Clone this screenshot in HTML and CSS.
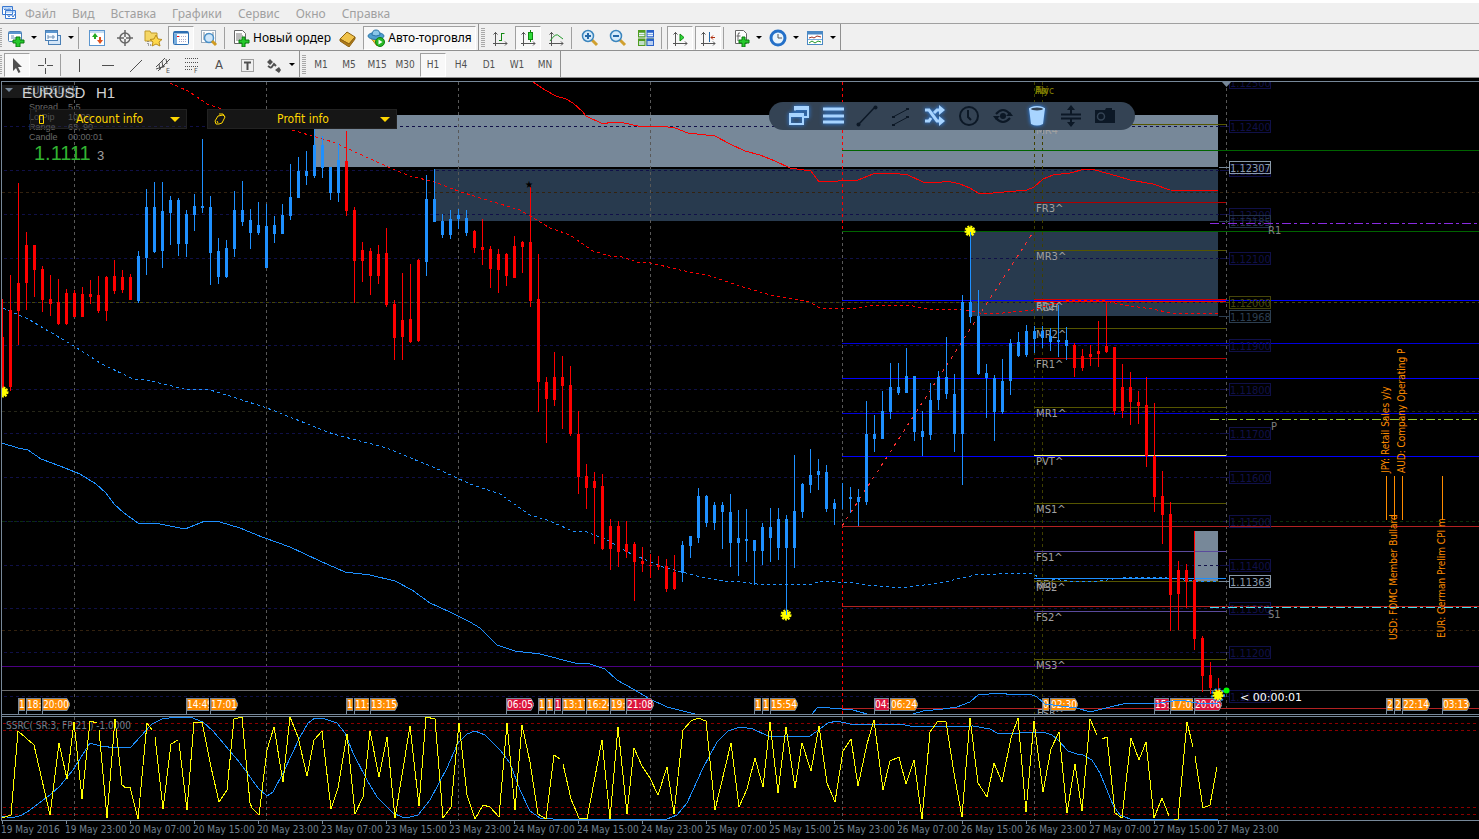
FILE: index.html
```
<!DOCTYPE html>
<html lang="ru">
<head>
    <meta charset="UTF-8">
    <meta name="viewport" content="width=device-width, initial-scale=1.0">
    <title>EURUSD, H1</title>
    <link rel="stylesheet" href="styles.css">
</head>
<body>
    <nav class="menu">
        <svg class="logo" width="16" height="16" viewBox="0 0 16 16"><path d="M1.500 1.500h10v8h-10zM4.500 5.500h10v8h-10z" fill="#fff" stroke="#3a78d0"/><path d="M2 3h9M5 7h9" stroke="#7ab0f0"/><path d="M6 9l2 3 2-3 2 3 2-3M3 5l1-1 2 1 2-1 2 1" fill="none" stroke="#3a78d0"/></svg>
        <button type="button">Файл</button>
        <button type="button">Вид</button>
        <button type="button">Вставка</button>
        <button type="button">Графики</button>
        <button type="button">Сервис</button>
        <button type="button">Окно</button>
        <button type="button">Справка</button>
    </nav>

    <div class="toolbars">
        <div class="toolbar">
            <span class="grip"></span>
            <button type="button" class="drop" aria-label="Новый график"><svg width="18" height="18" viewBox="0 0 18 18"><rect x="1.500" y="2.500" width="13" height="10" rx="1" fill="#fff" stroke="#4a7fb5"/><path d="M2 4h12" stroke="#5b96cf" stroke-width="2"/><path d="M4 7h3M4 9h5" stroke="#6a8fb5"/><path d="M9 8h4v3h4v3h-4v4H9v-4H6v-3h3z" fill="#25c92b" stroke="#0a7a10"/></svg></button>
            <button type="button" class="drop" aria-label="Профили"><svg width="18" height="18" viewBox="0 0 18 18"><rect x="4.500" y="6.500" width="12" height="9" fill="#d4e6f8" stroke="#4a7fb5"/><rect x="1.500" y="1.500" width="12" height="10" fill="#f4f9ff" stroke="#4a7fb5"/><path d="M2 3h11" stroke="#5b96cf" stroke-width="2"/><path d="M4 6v4M4 8h7M9 6v4" stroke="#6a8fb5"/></svg></button>
            <span class="sep"></span>
            <button type="button" aria-label="Обзор рынка"><svg width="18" height="18" viewBox="0 0 18 18"><rect x="1.500" y="1.500" width="15" height="15" fill="#fff" stroke="#5b96cf"/><path d="M2 3h14" stroke="#8fbce8"/><path d="M4 8l3-4 3 4H8v2H6V8z" fill="#22aa22"/><path d="M9 11h2V8h2v3h2l-3 4z" fill="#e0501e"/></svg></button>
            <button type="button" aria-label="Окно данных"><svg width="18" height="18" viewBox="0 0 18 18"><circle cx="9" cy="9" r="5" fill="none" stroke="#666" stroke-width="1.500"/><path d="M9 1v7M9 10v7M1 9h7M10 9h7" stroke="#666" stroke-width="1.500"/></svg></button>
            <button type="button" aria-label="Навигатор"><svg width="18" height="18" viewBox="0 0 18 18"><path d="M1 2h5l1 2h6v8H1z" fill="#f5d766" stroke="#c09a2a"/><path d="M4 12v4h5" fill="none" stroke="#555" stroke-dasharray="1 1"/><path d="M12 6l2 4 4 .500-3 2.500 1 4-4-2-4 2 1-4-3-2.500 4-.500z" fill="#ffd84a" stroke="#b98d1c"/></svg></button>
            <button type="button" class="on" aria-label="Терминал"><svg width="18" height="18" viewBox="0 0 18 18"><rect x="1.500" y="2.500" width="15" height="13" rx="1" fill="#fff" stroke="#2d6fb3"/><path d="M2 3.500h14" stroke="#2d6fb3" stroke-width="2"/><path d="M3.500 5v10" stroke="#79aede" stroke-width="3"/><path d="M7 7.500h8M7 10.500h8M7 12.500h8" stroke="#aac" stroke-dasharray="1 1"/><path d="M5 7.500h2" stroke="red"/></svg></button>
            <button type="button" aria-label="Тестер стратегий"><svg width="18" height="18" viewBox="0 0 18 18"><rect x="1.500" y="1.500" width="14" height="12" fill="#fff" stroke="#9ab"/><path d="M4 3v8M7 4v6M13 3v9" stroke="#789"/><circle cx="9" cy="9" r="4.500" fill="#cfe6f9" stroke="#4a90c8" stroke-width="1.500"/><path d="M12 12l4 4" stroke="#d09a20" stroke-width="3"/></svg></button>
            <span class="sep"></span>
            <button type="button" class="wide order"><svg width="18" height="18" viewBox="0 0 18 18"><path d="M2.500 1.500h8l3 3v10h-11z" fill="#fff" stroke="#666"/><path d="M4 5h6M4 7h7M4 9h5M4 11h4" stroke="#777"/><path d="M10 8h3v3h4v3h-4v4h-3v-4H7v-3h3z" fill="#25c92b" stroke="#0a7a10"/></svg>Новый ордер</button>
            <button type="button" aria-label="Редактор"><svg width="18" height="18" viewBox="0 0 18 18"><path d="M1 10l7-7 8 5-6 7z" fill="#f0c24a" stroke="#8f6412"/><path d="M1 10v2l9 6 6-8V8l-6 7z" fill="#b07a18" stroke="#8f6412"/></svg></button>
            <button type="button" class="wide auto on"><svg width="18" height="18" viewBox="0 0 18 18"><path d="M3 8l7 9 5-8z" fill="#f3c435" stroke="#b98d1c"/><ellipse cx="9" cy="7" rx="8" ry="3.500" fill="#4f9ed0" stroke="#2b75a8"/><path d="M5 6q0-5 4-5t4 5q-4 2-8 0" fill="#8cc8ea" stroke="#2b75a8"/><circle cx="13" cy="13" r="4.500" fill="#27b827" stroke="#118011"/><path d="M11.500 10.500v5l4-2.500z" fill="#fff"/></svg>Авто-торговля</button>
        </div>
        <div class="toolbar">
            <span class="grip"></span>
            <button type="button" aria-label="Бары"><svg width="18" height="18" viewBox="0 0 18 18"><path d="M4.500 3v14M2 14.500h14M2.500 5.500l2-2 2 2M14 12.500l2 2-2 2" fill="none" stroke="#555"/><path d="M10.500 4v8M10.500 4.500h3M8 11.500h2" stroke="#118811" fill="none"/></svg></button>
            <button type="button" class="on" aria-label="Свечи"><svg width="18" height="18" viewBox="0 0 18 18"><path d="M4.500 3v14M2 14.500h14M2.500 5.500l2-2 2 2M14 12.500l2 2-2 2" fill="none" stroke="#555"/><path d="M11.500 1v12" stroke="#118811"/><rect x="9.500" y="3.500" width="4" height="7" fill="#2fdc3a" stroke="#118811"/></svg></button>
            <button type="button" aria-label="Линия"><svg width="18" height="18" viewBox="0 0 18 18"><path d="M4.500 3v14M2 14.500h14M2.500 5.500l2-2 2 2M14 12.500l2 2-2 2" fill="none" stroke="#555"/><path d="M3 12q6-9 9-5l4 3" fill="none" stroke="#22992a"/></svg></button>
            <span class="sep"></span>
            <button type="button" aria-label="Увеличить"><svg width="18" height="18" viewBox="0 0 18 18"><path d="M11 11l5 5" stroke="#d0a030" stroke-width="3"/><circle cx="7" cy="7" r="5.500" fill="#d6ebfa" stroke="#3b85bd" stroke-width="1.500"/><path d="M4 7h6M7 4v6" stroke="#2468a8" stroke-width="2"/></svg></button>
            <button type="button" aria-label="Уменьшить"><svg width="18" height="18" viewBox="0 0 18 18"><path d="M11 11l5 5" stroke="#d0a030" stroke-width="3"/><circle cx="7" cy="7" r="5.500" fill="#d6ebfa" stroke="#3b85bd" stroke-width="1.500"/><path d="M4 7h6" stroke="#2468a8" stroke-width="2"/></svg></button>
            <button type="button" aria-label="Окна мозаикой"><svg width="18" height="18" viewBox="0 0 18 18"><path d="M1 1h7.500v7.500H1zM9.500 9.500H17V17H9.500z" fill="#4f9c20"/><path d="M9.500 1H17v7.500H9.500z" fill="#2a62c8"/><path d="M1 9.500h7.500V17H1z" fill="#4f9c20"/><path d="M9.500 9.500H17V17H9.500z" fill="#2a62c8"/><path d="M2 4.500h5.500M2 6.500h5.500M10.500 4.500H16M10.500 6.500H16M2 13h5.500M2 15h5.500M10.500 13H16M10.500 15H16" stroke="#e8f4ff" stroke-width="1.500"/></svg></button>
            <span class="sep"></span>
            <button type="button" class="on" aria-label="Автопрокрутка"><svg width="18" height="18" viewBox="0 0 18 18"><path d="M4.500 3v14M2 14.500h14M2.500 5.500l2-2 2 2M14 12.500l2 2-2 2" fill="none" stroke="#555"/><path d="M9 5v7l4-3.500z" fill="#2fdc3a" stroke="#118811"/></svg></button>
            <button type="button" class="on" aria-label="Сдвиг графика"><svg width="18" height="18" viewBox="0 0 18 18"><path d="M4.500 3v14M2 14.500h14M2.500 5.500l2-2 2 2M14 12.500l2 2-2 2" fill="none" stroke="#555"/><path d="M10.500 3v10" stroke="#2468a8"/><path d="M16 8.500h-4M14 6.500l-2 2 2 2" stroke="#b03010" fill="none"/></svg></button>
            <span class="sep"></span>
            <button type="button" class="drop" aria-label="Индикаторы"><svg width="18" height="18" viewBox="0 0 18 18"><path d="M3.500 1.500h8l3 3v10h-11z" fill="#fff" stroke="#666"/><path d="M8 4q-2-1-2 2v6M4.500 7h4" stroke="#666" fill="none"/><path d="M10 8h3v3h4v3h-4v4h-3v-4H7v-3h3z" fill="#25c92b" stroke="#0a7a10"/></svg></button>
            <button type="button" class="drop" aria-label="Периоды"><svg width="18" height="18" viewBox="0 0 18 18"><circle cx="9" cy="9" r="7" fill="#e8f4fd" stroke="#2470c8" stroke-width="3"/><path d="M9 5v4h4" stroke="#555" fill="none"/></svg></button>
            <button type="button" class="drop" aria-label="Шаблоны"><svg width="18" height="18" viewBox="0 0 18 18"><rect x="1.500" y="2.500" width="15" height="13" fill="#fff" stroke="#4a88c4"/><path d="M2 4h14" stroke="#4a88c4" stroke-width="3"/><path d="M3 9l3-1 2 1 3-2 4 1" stroke="#a03020" fill="none"/><path d="M2 10.500h14" stroke="#79aede"/><path d="M3 14l3-2 3 2 3-2 3 1" stroke="#22992a" fill="none"/></svg></button>
        </div>
    </div>

    <div class="toolbars">
        <div class="toolbar">
            <span class="grip"></span>
            <button type="button" class="on" aria-label="Курсор"><svg width="18" height="18" viewBox="0 0 18 18"><path d="M5 2v13l3-3 2.500 5 2-1-2.500-5h4z" fill="#505050"/></svg></button>
            <button type="button" aria-label="Перекрестие"><svg width="18" height="18" viewBox="0 0 18 18"><path d="M9.500 2v6M9.500 12v6M2 9.500h6M11 9.500h6" stroke="#505050"/></svg></button>
            <span class="sep"></span>
            <button type="button" aria-label="Вертикальная линия"><svg width="18" height="18" viewBox="0 0 18 18"><path d="M9.500 3v13" stroke="#505050"/></svg></button>
            <button type="button" aria-label="Горизонтальная линия"><svg width="18" height="18" viewBox="0 0 18 18"><path d="M4 9.500h12" stroke="#505050"/></svg></button>
            <button type="button" aria-label="Трендовая линия"><svg width="18" height="18" viewBox="0 0 18 18"><path d="M4 16L16 4" stroke="#505050"/></svg></button>
            <button type="button" aria-label="Канал"><svg width="18" height="18" viewBox="0 0 18 18"><path d="M2 11L11 2M4 15L16 3M5 8l1 6M8 5l1 7M12 3l1 5M2 13l9-3" stroke="#505050" fill="none"/><text class="sub" x="12" y="17">E</text></svg></button>
            <button type="button" aria-label="Фибоначчи"><svg width="18" height="18" viewBox="0 0 18 18"><path d="M3 2.500h13M3 6.500h13M3 10.500h13M3 13.500h8" stroke="#505050" stroke-dasharray="1 1"/><text class="sub" x="12" y="17">F</text></svg></button>
            <button type="button" class="letter">A</button>
            <button type="button" aria-label="Метка"><svg width="18" height="18" viewBox="0 0 18 18"><rect x="3.500" y="3.500" width="12" height="12" fill="none" stroke="#505050" stroke-dasharray="1 1"/><path d="M6 6.500h7M9.500 7v7" stroke="#505050" stroke-width="2"/></svg></button>
            <button type="button" class="drop" aria-label="Стрелки"><svg width="18" height="18" viewBox="0 0 18 18"><path d="M5 3l3 3-3 3-3-3zM10 14l4-3 2 3-2 3z" fill="#505050"/><path d="M6 12l3-4 2 2M3 10l3 2" stroke="#505050" fill="none" stroke-width="2"/></svg></button>
        </div>
        <div class="toolbar periods">
            <span class="grip"></span>
            <button type="button">M1</button>
            <button type="button">M5</button>
            <button type="button">M15</button>
            <button type="button">M30</button>
            <button type="button" class="on">H1</button>
            <button type="button">H4</button>
            <button type="button">D1</button>
            <button type="button">W1</button>
            <button type="button">MN</button>
        </div>
    </div>

    <main class="chart">
        <svg id="plot" viewBox="0 78 1479 761" role="img" aria-label="EURUSD H1"></svg>

        <div class="panels">
            <button type="button" class="panel account"><svg width="12" height="12" viewBox="0 0 12 12"><path d="M2.500 2.500h4v8h-4z" fill="none" stroke="#ffd700"/></svg><span>Account info</span></button>
            <button type="button" class="panel profit"><svg width="12" height="12" viewBox="0 0 12 12"><path d="M1 8l3-5 5-1 2 2-3 6-3 1H2zM3 8l1 2M5 1h4l2 3" fill="none" stroke="#ffd700"/></svg><span>Profit info</span></button>
        </div>

        <div class="tools">
            <button type="button" class="lit" aria-label="Окна"><svg width="24" height="24" viewBox="0 0 24 24"><path d="M8 6.500V3h13v10h-4" fill="none" stroke="currentColor" stroke-width="2"/><path d="M7 4h15" stroke="currentColor" stroke-width="4"/><path d="M3 11h13v9H3z" fill="none" stroke="currentColor" stroke-width="2"/><path d="M2 11h15" stroke="currentColor" stroke-width="4"/></svg></button>
            <button type="button" class="lit" aria-label="Список"><svg width="24" height="24" viewBox="0 0 24 24"><path d="M2 5h21M2 12h21M2 18h21" stroke="currentColor" stroke-width="3"/></svg></button>
            <button type="button" aria-label="Линия"><svg width="24" height="24" viewBox="0 0 24 24"><path d="M3 21L20 3" stroke="currentColor" stroke-width="1.500"/><circle cx="3.500" cy="20.500" r="2" fill="currentColor"/><circle cx="20.500" cy="3.500" r="2" fill="currentColor"/></svg></button>
            <button type="button" aria-label="Параллели"><svg width="24" height="24" viewBox="0 0 24 24"><path d="M4 13l15-8M4 21l15-8" stroke="currentColor"/><path d="M3 12h3v2H3zM17 4h3v2h-3zM3 20h3v2H3zM17 12h3v2h-3z" fill="currentColor"/></svg></button>
            <button type="button" class="lit" aria-label="Перемешать"><svg width="24" height="24" viewBox="0 0 24 24"><path d="M2 6h4l8 11h3M2 17h4l2-3M11 9l3-3h3" fill="none" stroke="currentColor" stroke-width="3"/><path d="M16 1l6 5-6 5zM16 12l6 5-6 5z" fill="currentColor"/></svg></button>
            <button type="button" aria-label="Часы"><svg width="24" height="24" viewBox="0 0 24 24"><circle cx="12" cy="12" r="9" fill="none" stroke="currentColor" stroke-width="2"/><path d="M11 6v7l3 3" fill="none" stroke="currentColor" stroke-width="2"/></svg></button>
            <button type="button" aria-label="Просмотр"><svg width="24" height="24" viewBox="0 0 24 24"><path d="M5 10q7-8 14 0M5 14q7 8 14 0" fill="none" stroke="currentColor" stroke-width="2"/><path d="M15 12h7l-3-4zM2 12h7l-4 4z" fill="currentColor"/><circle cx="12" cy="12" r="3" fill="currentColor"/></svg></button>
            <button type="button" class="lit" aria-label="Корзина"><svg width="24" height="24" viewBox="0 0 24 24"><path d="M4 4l2 16q6 3 12 0l2-16z" fill="currentColor"/><ellipse cx="12" cy="5" rx="8" ry="3" fill="currentColor"/><ellipse cx="12" cy="5" rx="6" ry="1.500" fill="#344354"/></svg></button>
            <button type="button" aria-label="Разделить"><svg width="24" height="24" viewBox="0 0 24 24"><path d="M2 10.500h20M2 14.500h20" stroke="currentColor" stroke-width="2"/><path d="M12 4v6M12 15v6" stroke="currentColor" stroke-width="2"/><path d="M8 6l4-5 4 5zM8 18l4 5 4-5z" fill="currentColor"/></svg></button>
            <button type="button" aria-label="Снимок"><svg width="24" height="24" viewBox="0 0 24 24"><path d="M2 6h10l1-2h6v2h3v13H2z" fill="currentColor"/><circle cx="8" cy="12.500" r="3.500" fill="none" stroke="#344354" stroke-width="1.500"/></svg></button>
        </div>
    </main>

    <script src="chart.js"></script>
</body>
</html>
```
FILE: styles.css
```
* {
    box-sizing: border-box;
}

body {
    margin: 0;
    background: #000;
    font-family: "DejaVu Sans Condensed", "DejaVu Sans", sans-serif;
    font-size: 11px;
}

button {
    display: flex;
    align-items: center;
    justify-content: center;
    margin: 0;
    padding: 0;
    border: 0;
    background: none;
    color: #505050;
    font: inherit;
}

svg {
    display: block;
    flex: none;
}

/* menu */
.menu {
    display: flex;
    align-items: center;
    gap: 16px;
    height: 24px;
    padding-left: 1px;
    border-top: 3px solid #fff;
    border-bottom: 1px solid #a0a0a0;
    background: #f0f0f0;
}

.menu .logo {
    margin-right: -8px;
}

.menu button {
    color: #a0a0a0;
    font-family: "Noto Sans", sans-serif;
    font-size: 12px;
}

/* toolbars */
.toolbars {
    display: flex;
    height: 27px;
    border-bottom: 1px solid #909090;
    background: #f0f0f0;
}

.toolbar {
    display: flex;
    align-items: center;
    gap: 2px;
    padding: 1px 2px 0;
    border-right: 1px solid #909090;
}

.toolbar:first-child {
    margin-left: -4px;
}

.toolbar button {
    width: 26px;
    height: 24px;
    border: 1px solid transparent;
}

.toolbar button.on {
    border-color: #a0a0a0 #fff #fff #a0a0a0;
    background: #f8f8f8;
}

.toolbar button.drop {
    width: 35px;
    gap: 6px;
}

.drop::after {
    content: "";
    border: 3px solid transparent;
    border-top-color: #000;
    border-bottom: 0;
}

.toolbar button.wide {
    gap: 3px;
    color: #000;
    font-family: "Noto Sans", sans-serif;
    font-size: 12px;
}

.toolbar button.order {
    width: 103px;
}

.toolbar button.auto {
    width: 113px;
}

.grip {
    width: 4px;
    height: 20px;
    background: repeating-linear-gradient(#a8a8a8 0 1px, #f0f0f0 1px 2px);
}

.sep {
    width: 4px;
    height: 22px;
    border-left: 1px solid #a0a0a0;
    border-right: 2px solid #f0f0f0;
}

.toolbar button.letter {
    font-size: 13px;
}

.periods button {
    font-size: 10px;
}

.sub {
    fill: #505050;
    font-size: 7px;
}

/* chart */
.chart {
    position: relative;
    background: #000;
}

#plot {
    width: 100%;
    height: auto;
}

.panels {
    position: absolute;
    top: 31px;
    left: 30px;
    display: flex;
    gap: 20px;
}

.panel {
    width: 190px;
    height: 20px;
    padding: 0 6px;
    border: 1px solid #222;
    background: #161616;
    color: #ffd700;
    font-size: 12px;
}

.panel.account {
    width: 157px;
    background: rgba(48, 48, 48, 0.4);
}

.panel span {
    flex: 1;
}

.panel::after {
    content: "";
    border: 5px solid transparent;
    border-top-color: #ffd700;
    border-bottom: 0;
}

.tools {
    position: absolute;
    top: 24px;
    left: 52%;
    display: flex;
    align-items: center;
    gap: 10px;
    height: 28px;
    padding: 0 18px;
    border-radius: 14px;
    background: #344354;
}

.tools button {
    color: #0c1826;
}

.tools .lit {
    color: #a8d4ff;
    filter: drop-shadow(0 0 2px #2f8dff);
}

/* chart text */
.price {
    font-size: 11px;
}

.time,
.title {
    fill: #708090;
    font-size: 10px;
}

.level {
    fill: #a0a0a0;
    font-family: "DejaVu Sans", sans-serif;
    font-size: 10px;
}

.pivot {
    fill: #808080;
    font-size: 11px;
}

.session {
    fill: #808000;
    font-size: 10px;
}

.tag {
    fill: #fff;
    font-size: 10px;
}

.news {
    fill: #ff8c00;
    font-size: 10px;
}

.info {
    fill: #6a6a6a;
    font-family: "Liberation Sans", sans-serif;
    font-size: 9px;
}

.symbol {
    fill: #d3d3d3;
    font-family: "Liberation Sans", sans-serif;
    font-size: 15px;
}

.bid {
    fill: #32b432;
    font-family: "Liberation Sans", sans-serif;
    font-size: 20px;
}

.pip {
    fill: #a0a0a0;
    font-family: "Liberation Sans", sans-serif;
    font-size: 13px;
}

.timer {
    fill: #fff;
    font-family: "DejaVu Sans", sans-serif;
    font-size: 11px;
}
```
FILE: chart.js
```
const svg = document.getElementById("plot");
const NS = "http://www.w3.org/2000/svg";

function add(name, attrs, parent = svg) {
    const el = document.createElementNS(NS, name);
    for (const key in attrs) el.setAttribute(key, attrs[key]);
    parent.appendChild(el);
    return el;
}

function hline(y, x1, x2, color, dash) {
    add("path", { d: `M${x1} ${y + 0.5}H${x2}`, stroke: color, "stroke-dasharray": dash || "none" });
}

function vline(x, y1, y2, color, dash) {
    add("path", { d: `M${x + 0.5} ${y1}V${y2}`, stroke: color, "stroke-dasharray": dash || "none" });
}

function rect(x, y, w, h, fill) {
    add("rect", { x, y, width: w, height: h, fill });
}

function text(x, y, str, cls, extra) {
    add("text", { x, y, class: cls, ...extra }).textContent = str;
}

function curve(points, color, dash) {
    add("polyline", { points, fill: "none", stroke: color, "stroke-dasharray": dash || "none", "shape-rendering": "crispEdges" });
}

rect(0, 78, 1479, 761, "#000");

// zones
rect(315, 115, 903, 52, "#778899");
rect(435, 169, 783, 52, "#283a4e");
rect(971, 231, 247, 85, "#283a4e");
rect(1195, 531, 23, 50, "#778899");

// grid
[126, 170, 214, 258, 302, 345, 389, 433, 477, 521, 565, 608, 652, 696].forEach(y => {
    hline(y, 4, 1220, "#101048", "3 3");
    hline(y, 1220, 1229, "#101048");
});
[[192, "#33220f"], [302, "#46460a"], [411, "#262618"], [521, "#0c300c"], [630, "#33220f"]].forEach(([y, color]) => hline(y, 2, 1479, color, "3 3"));
[74, 266, 458, 650, 1226].forEach(x => {
    vline(x, 82, 714, "#585858", "3 3");
    vline(x, 717, 820, "#585858", "3 3");
});
vline(842, 82, 231, "#ff0000", "3 3");
vline(842, 231, 525, "#585858", "3 3");
vline(842, 525, 714, "#ff0000", "3 3");
vline(842, 717, 820, "#585858", "3 3");
vline(1034, 82, 714, "#404000", "3 3");
vline(1042, 82, 714, "#404000", "3 3");
vline(1034, 717, 820, "#585858", "3 3");

// horizontal levels
[[150, "#006400"], [231, "#006400"], [300, "#0000ff"], [343, "#0000dd"], [378, "#0000ff"], [413, "#0000dd"], [456, "#0000ff"], [526, "#b22222"], [606, "#b22222"], [708, "#b22222"]].forEach(([y, color]) => hline(y, 842, 1479, color));
hline(666, 2, 1479, "#4b0082");
hline(690, 2, 1479, "#6c6c6c");

// pivots
const levels = [
    [124, "#555500", "MR4^", 134], [202, "#b00000", "FR3^", 212], [250, "#555500", "MR3^", 260],
    [299, "#d00000", "FR2^", 310], [301, "#ff0000", "RDH", 311], [328, "#555500", "MR2^", 338],
    [358, "#b00000", "FR1^", 368], [407, "#555500", "MR1^", 417], [455, "#ffff66", "PVT^", 465],
    [503, "#555500", "MS1^", 513], [551, "#5a4a9c", "FS1^", 561], [578, "#1e90ff", "RDL", 588],
    [581, "#555500", "MS2^", 591], [611, "#5a4a9c", "FS2^", 621], [659, "#555500", "MS3^", 669]
];
levels.forEach(([y, color, name, ty]) => {
    hline(y, 1034, 1226, color);
    text(1036, ty, name, "level");
});
text(1037, 717, "FS3^", "level");
text(1035, 94, "Fix", "session");
text(1035, 94, "Asi", "session");
text(1037, 94, "Nyc", "session");

// moving averages
curve("533,82 545,90 556,96 566,99 573,103 583,112 586,116 603,124 612,122 624,123 638,126 660,126 675,128 688,133 715,136 730,144 745,151 760,155 775,161 790,168 811,171 819,182 858,180 873,174 892,173 908,175 923,182 937,183 947,181 960,184 970,188 978,193 993,193 1027,190 1034,187 1043,179 1053,175 1070,173 1085,169 1095,170 1117,176 1130,180 1153,184 1170,190 1218,191", "#ff0000");
curve("170,83 188,91 200,99 207,104 219,108 260,120 302,133 333,142 353,151 388,167 410,176 435,182 458,191 477,197 520,210 533,218 550,228 570,235 593,251 610,256 622,257 637,262 647,262 680,270 710,276 740,286 770,295 810,302 820,308 858,308 872,305 908,305 927,309 960,309 980,313 1003,313 1033,310 1060,302 1070,300 1100,300 1130,306 1153,309 1170,313 1218,314", "#ff0000", "3 3");
curve("3,308 28,319 50,332 74,346 100,363 133,379 147,380 188,390 207,389 233,397 267,408 300,421 333,434 387,448 413,459 440,470 470,484 500,494 530,515 547,520 573,531 587,532 607,540 627,552 663,567 697,576 723,581 743,582 757,584 797,584 810,585 820,581 853,583 868,585 900,588 940,583 975,575 1020,573 1033,574 1040,578 1070,581 1100,581 1127,577 1167,578 1193,581 1218,581", "#1e90ff", "3 3");
curve("2,443 18,448 28,450 41,459 60,466 80,474 96,484 106,493 114,504 124,513 138,523 160,524 185,529 205,521 220,522 240,528 262,537 290,547 320,561 345,572 370,575 395,581 412,590 430,603 450,612 470,622 480,628 497,645 515,651 540,654 575,663 590,664 605,669 617,680 633,689 650,699 667,707 687,712 695,714", "#1e90ff");
curve("812,714 818,707 830,708 853,710 867,714", "#1e90ff");
curve("842,526 1034,231", "#ff3030", "3 5");

// candles: high, body top, body bottom, low; every 8px from x = 2
const candles = [
    [299, 337, 393, 393], [275, 310, 387, 391], [183, 283, 311, 345], [232, 245, 283, 310], [245, 245, 270, 297],
    [266, 269, 300, 312], [275, 299, 304, 316], [279, 302, 324, 325], [289, 293, 324, 325], [290, 293, 317, 317],
    [287, 294, 317, 317], [280, 294, 297, 304], [276, 295, 311, 313], [276, 277, 311, 321], [260, 276, 291, 294],
    [270, 277, 290, 293], [274, 277, 300, 300], [251, 256, 301, 303], [189, 207, 258, 275], [182, 207, 252, 253],
    [182, 211, 251, 268], [196, 200, 213, 245], [198, 200, 244, 256], [210, 214, 244, 257], [194, 206, 215, 231],
    [139, 206, 208, 213], [196, 207, 253, 285], [238, 251, 277, 284], [240, 248, 277, 278], [191, 210, 249, 257],
    [181, 210, 222, 226], [209, 220, 233, 249], [202, 225, 233, 235], [204, 226, 268, 268], [216, 225, 234, 243],
    [204, 215, 234, 234], [164, 197, 216, 220], [157, 171, 198, 198], [151, 171, 176, 185], [129, 145, 176, 178],
    [136, 145, 168, 178], [167, 167, 193, 200], [143, 160, 193, 202], [131, 161, 211, 216], [207, 210, 261, 303],
    [242, 250, 261, 282], [248, 251, 276, 295], [245, 254, 276, 284], [228, 253, 305, 307], [300, 304, 338, 360],
    [273, 320, 337, 360], [264, 319, 342, 343], [259, 260, 341, 342], [175, 199, 262, 276], [169, 199, 222, 222],
    [214, 221, 235, 238], [210, 219, 235, 239], [209, 215, 219, 229], [210, 218, 233, 236], [230, 231, 248, 253],
    [219, 247, 250, 265], [246, 249, 269, 288], [249, 254, 270, 293], [253, 254, 276, 286], [236, 246, 278, 278],
    [241, 242, 247, 273], [185, 242, 301, 307], [254, 299, 382, 412], [377, 382, 399, 443], [352, 377, 400, 406],
    [356, 377, 386, 429], [366, 385, 434, 436], [411, 434, 477, 494], [464, 476, 488, 509], [472, 481, 488, 544],
    [474, 486, 549, 550], [519, 526, 549, 570], [521, 526, 552, 567], [521, 544, 552, 558], [542, 544, 562, 601],
    [547, 561, 564, 572], [554, 565, 566, 578], [556, 565, 567, 570], [559, 566, 589, 592], [555, 572, 589, 590],
    [541, 545, 573, 582], [536, 536, 546, 558], [488, 496, 538, 543], [495, 496, 523, 527], [502, 505, 523, 530],
    [502, 505, 512, 549], [494, 512, 543, 567], [510, 538, 543, 576], [509, 539, 541, 562], [540, 540, 551, 585],
    [523, 527, 551, 565], [508, 527, 538, 562], [508, 519, 548, 560], [515, 519, 548, 612], [455, 511, 548, 568],
    [483, 484, 512, 518], [449, 475, 485, 493], [459, 471, 475, 490], [465, 472, 509, 512], [499, 503, 509, 525],
    [483, 509, 509, 509], [487, 497, 499, 513], [489, 497, 502, 526], [401, 434, 502, 505], [415, 434, 439, 452],
    [391, 411, 439, 439], [363, 387, 412, 419], [363, 387, 393, 395], [348, 376, 393, 393], [376, 376, 432, 441],
    [411, 431, 437, 456], [383, 400, 435, 440], [371, 377, 400, 410], [337, 377, 394, 399], [374, 394, 434, 452],
    [295, 302, 434, 485], [232, 302, 317, 323], [290, 316, 374, 375], [364, 373, 378, 418], [375, 378, 412, 441],
    [359, 381, 412, 414], [339, 343, 381, 395], [332, 342, 356, 357], [325, 331, 355, 357], [326, 331, 339, 353],
    [326, 331, 338, 348], [328, 336, 342, 351], [305, 340, 342, 357], [327, 340, 346, 360], [343, 345, 368, 377],
    [349, 356, 368, 371], [345, 354, 357, 366], [321, 351, 354, 367], [301, 346, 352, 353], [347, 347, 411, 415],
    [364, 387, 411, 418], [372, 387, 402, 425], [391, 402, 406, 424], [377, 405, 456, 467], [403, 456, 497, 512],
    [471, 496, 515, 544], [502, 514, 595, 631], [561, 570, 594, 630], [564, 570, 582, 608], [531, 580, 639, 650],
    [636, 638, 676, 692], [662, 675, 688, 694], [678, 690, 695, 697]
];
// index ranges where the trend filter is bullish
const bullish = [[17, 42], [53, 58], [85, 133]];
candles.forEach(([high, top, bottom, low], i) => {
    const x = 2 + i * 8;
    const color = bullish.some(([a, b]) => i >= a && i <= b) ? "#1e90ff" : "#ff0000";
    rect(x, high, 1, low - high, color);
    rect(x - 1, top, 3, bottom - top, color);
});

// swing markers
function sun(cx, cy, halo) {
    if (halo) add("circle", { cx, cy, r: 6, fill: "none", stroke: "#1e90ff", "stroke-width": 2, "stroke-dasharray": "2 2" });
    add("circle", { cx, cy, r: 4, fill: "#ffff00" });
    add("circle", { cx, cy, r: 4.5, fill: "none", stroke: "#ffff00", "stroke-width": 2, "stroke-dasharray": "2 1" });
}
sun(3, 392);
rect(0, 384, 1, 16, "#000");
sun(786, 615);
sun(970, 231);
rect(786, 606, 1, 9, "#1e90ff");
rect(970, 232, 1, 5, "#1e90ff");
text(525, 188, "★", "star", { "font-size": 10, fill: "#000" });

// price scale
const navy = "#101048";
[
    [86, "1.12500", navy], [126, "1.12400", navy], [170, "1.12300", navy], [167, "1.12307", "#8a9aab"],
    [214, "1.12200", navy], [221, "1.12185", "#24344a"], [258, "1.12100", navy], [302, "1.12000", "#46460a"],
    [316, "1.11968", "#2c3e50"], [345, "1.11900", navy], [389, "1.11800", navy], [433, "1.11700", navy],
    [477, "1.11600", navy], [521, "1.11500", navy], [565, "1.11400", navy], [581, "1.11363", "#8a9aab"],
    [608, "1.11300", navy], [652, "1.11200", navy], [696, "1.11100", navy]
].forEach(([y, label, color]) => {
    const top = label === "1.12500" ? 76.5 : y - 5.5;
    add("rect", { x: 1229.5, y: top, width: 41, height: 12, fill: "none", stroke: color });
    text(1230, top + 10.5, label, "price", { fill: color });
});
rect(1200, 78, 100, 4, "#000");
[[167, "#778899"], [221, "#2c3e50"], [316, "#2c3e50"], [581, "#778899"]].forEach(([y, color]) => hline(y, 1219, 1229, color));

[[223, "#8a2be2"], [419, "#9acd32"], [607, "#40e0f0"]].forEach(([y, color]) => hline(y, 1210, 1479, color, "9 3 3 3"));
text(1268, 234, "R1", "pivot");
text(1271, 430, "P", "pivot");
text(1268, 618, "S1", "pivot");

// calendar tags
const orange = "#ff8c00";
const red = "#dc143c";
[
    [18, 7, "1", orange], [26, 15, "18:", orange], [42, 28, "20:00", orange], [186, 23, "14:49", orange],
    [210, 28, "17:01", orange], [346, 7, "1", orange], [354, 15, "11:", orange], [370, 28, "13:15", orange],
    [506, 28, "06:05", red], [538, 7, "1", orange], [546, 7, "1", orange], [554, 7, "1", red],
    [562, 23, "13:17", orange], [586, 23, "16:24", orange], [610, 15, "19:", orange], [626, 28, "21:08", red],
    [754, 7, "1", orange], [762, 7, "1", orange], [770, 28, "15:54", orange], [874, 15, "04:", red],
    [890, 28, "06:24", orange], [1042, 7, "0", orange], [1050, 28, "02:30", orange], [1154, 15, "15:", red],
    [1170, 23, "17:01", orange], [1194, 28, "20:06", red], [1386, 7, "2", orange], [1394, 7, "2", orange],
    [1402, 28, "22:14", orange], [1442, 28, "03:13", orange]
].forEach(([x, w, label, fill]) => {
    const box = add("svg", { x, y: 698, width: w, height: 16 });
    const tip = w === 28 ? "M1 .5H25L28 6.5L25 12.5H1Z" : `M1 .5H${w}V12.5H1Z`;
    add("path", { d: tip, fill, stroke: "#778899", "stroke-width": 1 }, box);
    add("path", { d: "M.5 0V16", stroke: "#778899" }, box);
    add("text", { x: 1, y: 10, class: "tag" }, box).textContent = label;
});
curve("913,714 923,711 943,709 957,707 970,702 978,695 1000,693 1013,695 1030,694 1037,697 1045,704 1077,708 1090,712 1110,707 1127,703 1153,704 1180,700 1197,703 1218,704", "#1e90ff");
sun(1218, 695, true);
add("circle", { cx: 1226.5, cy: 690.5, r: 3, fill: "#00ff00" });
text(1240, 701, "< 00:00:01", "timer");

// upcoming events
[[1386, "JPY: Retail Sales y/y", 473], [1402, "AUD: Company Operating P", 473], [1394, "USD: FOMC Member Bullard", 640], [1442, "EUR: German Prelim CPI m", 638]].forEach(([x, label, y]) => {
    text(0, 0, label, "news", { transform: `translate(${x + 3} ${y}) rotate(-90)` });
    vline(x, 476, 520, orange);
});

// oscillator window
rect(0, 715, 1479, 2, "#000");
[723, 730, 807, 814].forEach(y => hline(y, 3, 1477, "#8b0000", "3 3"));
text(6, 729, "SSRC( SR:3, FP:21 ) -1.0000", "title");
curve("2,816 12,818 22,815 30,810 50,795 60,786 73,770 83,754 90,743 100,746 117,748 131,747 140,737 152,724 162,719 177,717 190,717 203,722 213,731 240,763 258,788 267,796 273,792 283,773 300,737 308,723 315,718 325,719 337,723 345,733 353,753 367,780 377,797 393,813 402,817 410,817 418,815 430,800 447,768 458,743 467,734 475,731 485,735 500,750 510,763 520,790 530,811 540,818 553,819 667,819 677,815 687,803 703,768 717,742 728,731 740,727 753,729 768,736 810,736 820,729 828,723 837,721 850,724 900,724 910,726 937,727 973,726 990,729 997,733 1007,734 1020,733 1043,732 1052,735 1058,740 1068,751 1077,754 1083,755 1092,760 1100,773 1113,805 1120,815 1130,819 1218,819", "#1e90ff");
[
    "2,818 11,815 18,731 34,745 50,815 59,743 67,779 74,722 82,799 90,721 97,723",
    "99,730 107,818 115,719 122,785 126,788 130,787 138,819 147,723 152,730",
    "155,737 163,809 171,744 178,740",
    "179,743 187,810 194,722 202,722 211,767 219,802 227,790 234,719 242,717 250,803 252,808 259,815 267,750 274,727 283,782 290,717 298,737 307,776 314,740 322,731 331,809 338,788 347,734 355,814 363,797 370,731 379,777 387,737 395,818 410,726 419,806 426,717 435,719 443,818 451,807 459,723 467,795 475,819 483,805 490,807 499,817 507,723 515,810 522,725 530,762 538,814 546,819 554,755 560,759",
    "563,764 571,799 579,818 587,819 602,740 610,819 618,727 627,814 634,748 642,766 650,778 658,795 667,767 674,814 683,730 691,721 698,718 706,721 715,810 731,743 739,807 747,789 755,758 763,787 770,722 778,793 786,727 795,788 802,743 811,771 819,726 827,783 835,802 843,751 851,739 858,786 867,744 874,720 883,790 890,761 899,757 906,784 914,760 922,819 930,732 938,721 946,722 954,773 962,817 970,718 978,783 987,797 994,763 1002,782 1011,738 1018,718 1026,812 1034,721 1043,792 1051,749 1059,732 1067,813 1075,764 1082,811 1090,719 1097,735",
    "1102,739 1107,737 1115,813 1122,818 1131,738 1139,760 1146,742 1154,818 1162,798 1169,816",
    "1174,819 1178,819 1187,722 1193,747",
    "1195,756 1203,808 1210,805 1217,767"
].forEach(points => curve(points, "#ffff00"));

// frames
hline(81, 1, 1479, "#778899");
hline(714, 1, 1479, "#778899");
hline(716, 1, 1479, "#778899");
hline(820, 1, 1479, "#778899");
vline(1, 82, 820, "#778899");
add("path", { d: "M1222 82h9l-4.500 5z", fill: "#778899" });

// time scale
const times = ["19 May 2016", "19 May 23:00"];
["20", "23", "24", "25", "26", "27"].forEach(day => ["07", "15", "23"].forEach(hour => times.push(`${day} May ${hour}:00`)));
times.forEach((label, i) => {
    vline(2 + i * 64, 820, 824, "#778899");
    text(1 + i * 64, 833, label, "time");
});

// symbol block
rect(2, 85, 72, 13, "#1a1a1a");
add("path", { d: "M5 88h8l-4 4z", fill: "#778899" });
text(27, 94, "EURUSD,H1", "title");
text(22, 98, "EURUSD", "symbol");
text(96, 98, "H1", "symbol");
[["Spread", "5.5"], ["LotPip", "10.00"], ["Range", "63, 90"], ["Candle", "00:00:01"]].forEach(([name, value], i) => {
    text(29, 110 + i * 10, name, "info");
    text(68, 110 + i * 10, value, "info");
});
text(34, 160, "1.1111", "bid");
text(97, 160, "3", "pip");
```
